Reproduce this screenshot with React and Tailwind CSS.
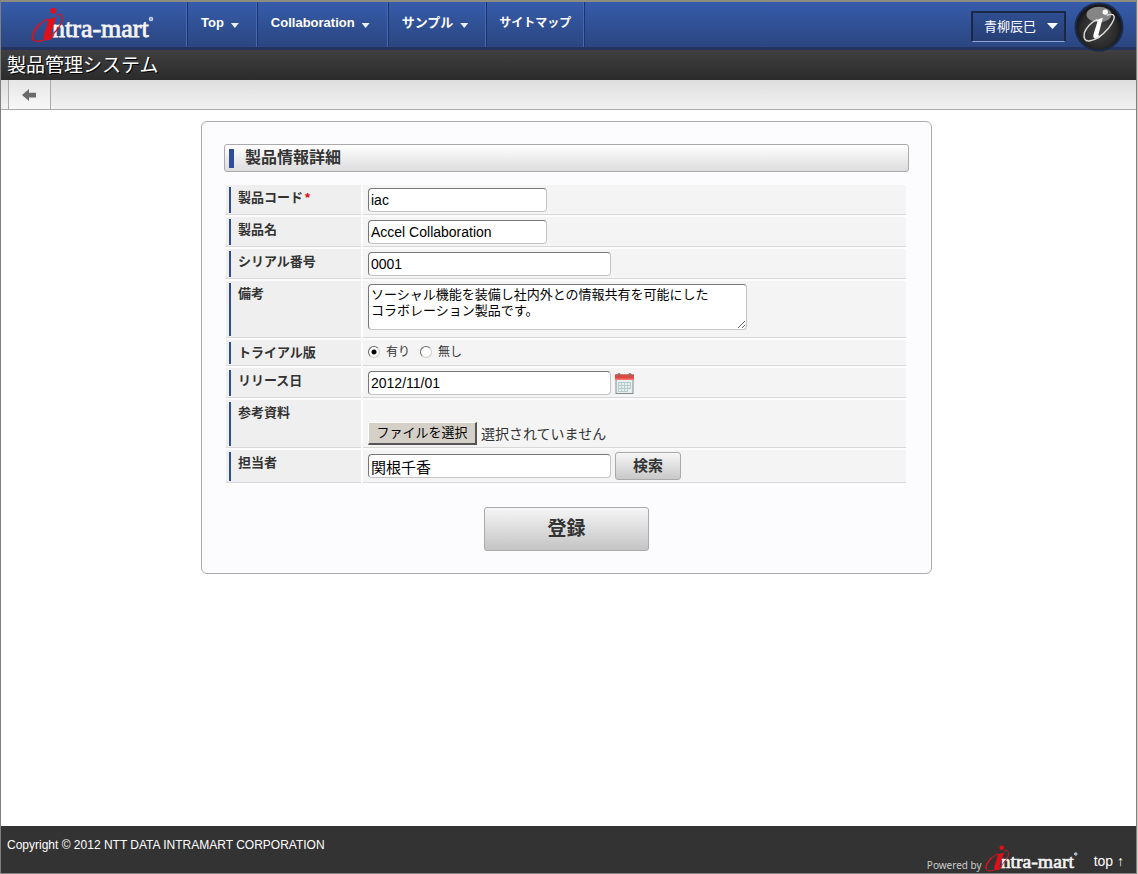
import { useRef, useState } from "react";

const navItems = [
  { label: "Top", menu: true },
  { label: "Collaboration", menu: true },
  { label: "サンプル", menu: true },
  { label: "サイトマップ", menu: false },
];

function IntraMartLogo({ className }) {
  return (
    <svg viewBox="0 0 124 38" className={className} role="img" aria-label="intra-mart">
      <text x="22" y="31" fontFamily="'Liberation Serif', serif" fontSize="26" fill="#f4f4f4" stroke="#f4f4f4" strokeWidth="0.8">
        ntra-mart
      </text>
      <circle cx="121" cy="13" r="1.7" fill="#8fa0cc" stroke="#c9d0e4" strokeWidth="1.2" />
      <circle cx="23.4" cy="4.8" r="3" fill="#e0101b" />
      <path d="M17 13.6 Q21 12.6 26.5 11 L20.5 29 Q19.6 32 22 30.6 L25 28 Q21.5 34.6 17 34.4 Q12.4 33.6 13.8 29 L18.2 15.6 Z" fill="#e0101b" />
      <path d="M18 12.5 Q8 18 4 26 Q-0.5 35 7.5 35.5 Q17 35 26 25 Q35 14 31.5 9.5 Q30 7.5 27 8.6" fill="none" stroke="#d8141f" strokeWidth="1.3" />
      <path d="M10 18 Q0.5 27.5 3.4 33.4" fill="none" stroke="#d8141f" strokeWidth="1.8" />
    </svg>
  );
}

function InfoBadge() {
  return (
    <svg viewBox="0 0 52 52" className="size-[50px]" role="img" aria-label="info">
      <defs>
        <radialGradient id="badge" cx="50%" cy="55%" r="50%">
          <stop offset="0" stopColor="#454545" />
          <stop offset="0.8" stopColor="#2a2a2a" />
          <stop offset="1" stopColor="#16181c" />
        </radialGradient>
      </defs>
      <circle cx="26" cy="26" r="25.5" fill="#1b2a4d" />
      <circle cx="26" cy="26" r="23.5" fill="url(#badge)" />
      <ellipse cx="26" cy="13" rx="13" ry="8" fill="#858585" />
      <circle cx="32.5" cy="10.5" r="2.8" fill="#fff" />
      <path d="M22.5 19 L30 16.5 L25.5 33.5 Q25 36 27.5 34.5 L29.5 33 Q27 38.5 22.5 38.5 Q19 37.5 20.5 33 L24.5 20 Z" fill="#fff" />
      <path d="M24 18 Q14 23.5 10.8 32 Q9 41 16 40.5 Q26 39 36 27 Q44 16.5 41 13.5 Q39 12 34 14" fill="none" stroke="#d8d8d8" strokeWidth="1.5" />
    </svg>
  );
}

function CalendarIcon() {
  return (
    <svg viewBox="0 0 19 21" className="h-[21px] w-[19px]" aria-hidden="true">
      <rect x="1" y="2" width="17" height="18.5" fill="#e6efee" stroke="#858b8b" />
      <rect x="0" y="1.5" width="19" height="5.5" fill="#e2473f" />
      <rect x="0" y="5.5" width="19" height="1.5" fill="#f0776f" />
      <rect x="2.5" y="0" width="3" height="4" rx="1.5" fill="#a06460" />
      <rect x="13.5" y="0" width="3" height="4" rx="1.5" fill="#a06460" />
      <path d="M3 9.5h13M3 12.5h13M3 15.5h13M3 18.5h10M3.5 9v9.5M6.5 9v9.5M9.5 9v9.5M12.5 9v9.5M15.5 9v7" stroke="#b5cccd" strokeWidth="1" fill="none" />
    </svg>
  );
}

function Row({ label, htmlFor, required, className = "pt-[3px] pb-0.5", children }) {
  return (
    <div className="grid grid-cols-[135px_1fr] gap-0.5">
      <div className="flex border-b border-[#d8d8d8] bg-[#efefef] pt-0.5 pb-px pl-[3px]">
        <label htmlFor={htmlFor} className="border-l-2 border-[#2d4d96] pl-[7px] text-[13px] leading-[22px] font-bold">
          {label}
          {required && <span className="ml-0.5 text-red-600">*</span>}
        </label>
      </div>
      <div className={`flex items-center border-b border-[#d8d8d8] bg-[#f4f4f4] px-[5px] ${className}`}>{children}</div>
    </div>
  );
}

const fieldClass =
  "rounded border border-[#c4c4c4] border-t-[#777] border-l-[#777] bg-white px-0.5 text-black outline-none";

function TextField({ className, ...props }) {
  return <input type="text" className={`h-6 ${fieldClass} ${className}`} {...props} />;
}

function Radio({ label, ...props }) {
  return (
    <label className="flex items-center gap-1.5 text-[12px] leading-5">
      <input
        type="radio"
        className="size-3 appearance-none rounded-full border border-[#d0ccc4] border-t-[#666] border-l-[#666] bg-white checked:bg-[radial-gradient(circle,#000_2px,#fff_3px)]"
        {...props}
      />
      {label}
    </label>
  );
}

export default function App() {
  const fileRef = useRef(null);
  const [fileName, setFileName] = useState("選択されていません");

  return (
    <div className="bg-[#d4d0c8] pr-px font-['Liberation_Sans','Noto_Sans_CJK_JP',sans-serif] text-[#333]">
      <div className="flex min-h-screen flex-col border-x border-b border-[#808080] bg-white">
        <header className="flex items-stretch border-t-2 border-b-3 border-t-[#8c8c80] border-b-[#22345f] bg-linear-to-b from-[#365cab] to-[#2b4680]">
          <a href="#" className="flex h-[45px] w-[186px] items-start border-r border-[#4169bd] pt-1 pl-[29px]">
            <IntraMartLogo className="h-[38px] w-[124px]" />
          </a>
          <nav className="flex">
            {navItems.map((item) => (
              <a
                key={item.label}
                href="#"
                className={`flex gap-[7px] border-r border-l border-r-[#4169bd] border-l-[#1e3465] pt-[11px] leading-5 font-bold text-white ${item.menu ? "pr-[17px] pl-[13px] text-[13px]" : "px-3 text-[12px]"}`}
              >
                {item.label}
                {item.menu && <span className="mt-2.5 h-[5px] w-2 bg-[#eef1f8] [clip-path:polygon(0_0,100%_0,50%_100%)]" />}
              </a>
            ))}
          </nav>
          <div className="flex flex-1 items-start justify-end border-l border-[#1e3465] pr-3">
            <div className="relative mt-[9px] mr-2">
              <select
                aria-label="ユーザー"
                className="h-[31px] w-[95px] appearance-none border-2 border-b-1 border-[#1a2747] border-b-[#8ea4d4] bg-linear-to-b from-[#2f4f92] to-[#263f75] pl-[11px] text-[13px] text-white"
              >
                <option>青柳辰巳</option>
              </select>
              <span className="pointer-events-none absolute top-3 right-2 h-1.5 w-[11px] bg-white [clip-path:polygon(0_0,100%_0,50%_100%)]" />
            </div>
            <div className="relative -mb-2.5">
              <InfoBadge />
            </div>
          </div>
        </header>

        <div className="bg-linear-to-b from-[#404040] to-[#2b2b2b] pt-0.5 pl-1.5">
          <h1 className="text-[19px] leading-7 text-white text-shadow-[1px_1px_0_#000]">製品管理システム</h1>
        </div>

        <div className="flex border-b border-[#aaa] bg-linear-to-b from-[#dedede] to-[#f2f2f2] pl-[7px]">
          <button
            type="button"
            aria-label="戻る"
            className="flex h-[29px] w-[43px] items-center justify-center border-x border-[#aaa] bg-linear-to-b from-[#e6e6e6] to-[#f8f8f8] pr-px"
          >
            <svg viewBox="0 0 14 12" className="h-3 w-3.5" aria-hidden="true">
              <path d="M0 6 L7 0 V3.8 H14 V8.4 H7 V12 Z" fill="#6b6b6b" />
            </svg>
          </button>
        </div>

        <main className="flex-1 pt-[11px] pr-1">
          <form
            onSubmit={(e) => e.preventDefault()}
            className="mx-auto max-w-[731px] rounded-md border border-[#aaa] bg-[#fcfcfe] p-[22px]"
          >
            <h2 className="flex items-center gap-[11px] rounded-[3px] border border-[#aaa] bg-linear-to-b from-white to-[#dcdcdc] px-1 text-[16px] leading-[26px] font-bold">
              <span className="h-[19px] w-[5px] bg-[#2d4d96]" />
              製品情報詳細
            </h2>

            <div className="mt-[13px] mr-[3px] ml-0.5 grid gap-0.5">
              <Row label="製品コード" htmlFor="code" required>
                <TextField id="code" defaultValue="iac" className="w-[179px] text-[14px]" />
              </Row>
              <Row label="製品名" htmlFor="name">
                <TextField id="name" defaultValue="Accel Collaboration" className="w-[179px] text-[14px]" />
              </Row>
              <Row label="シリアル番号" htmlFor="serial">
                <TextField id="serial" defaultValue="0001" className="w-[243px] text-[14px]" />
              </Row>
              <Row label="備考" htmlFor="note" className="pt-[3px] pb-[7px]">
                <textarea
                  id="note"
                  defaultValue={"ソーシャル機能を装備し社内外との情報共有を可能にした\nコラボレーション製品です。"}
                  className={`h-[46px] w-[379px] resize py-0.5 text-[13px] leading-4 ${fieldClass}`}
                />
              </Row>
              <Row label="トライアル版" htmlFor="trial-yes" className="gap-2.5 pb-0.5">
                <Radio id="trial-yes" name="trial" label="有り" defaultChecked />
                <Radio id="trial-no" name="trial" label="無し" />
              </Row>
              <Row label="リリース日" htmlFor="release">
                <TextField id="release" defaultValue="2012/11/01" className="w-[243px] text-[14px]" />
                <button type="button" aria-label="カレンダー" className="ml-1">
                  <CalendarIcon />
                </button>
              </Row>
              <Row label="参考資料" htmlFor="file" className="pt-[22px] pb-0.5">
                <input
                  ref={fileRef}
                  id="file"
                  type="file"
                  className="hidden"
                  onChange={(e) => setFileName(e.target.files[0]?.name ?? "選択されていません")}
                />
                <button
                  type="button"
                  onClick={() => fileRef.current.click()}
                  className="h-[23px] w-[109px] border border-r-2 border-b-2 border-white border-r-[#555] border-b-[#555] bg-[#d4d0c8] text-[13px] leading-5 text-black"
                >
                  ファイルを選択
                </button>
                <span className="ml-1 text-[14px] leading-5">{fileName}</span>
              </Row>
              <Row label="担当者" htmlFor="person" className="py-0.5">
                <TextField id="person" defaultValue="関根千香" className="w-[243px] text-[15px]" />
                <button
                  type="button"
                  className="ml-1 h-7 w-[66px] rounded-[3px] border border-[#aaa] bg-linear-to-b from-[#f6f6f6] to-[#c8c8c8] text-[15px] leading-6 font-bold"
                >
                  検索
                </button>
              </Row>
            </div>

            <div className="mt-6">
              <button
                type="submit"
                className="mx-auto block h-11 w-[165px] rounded-[3px] border border-[#aaa] bg-linear-to-b from-[#f6f6f6] to-[#c4c4c4] text-[19px] font-bold"
              >
                登録
              </button>
            </div>
          </form>
        </main>

        <footer className="flex h-[47px] items-start justify-between bg-[#333] pr-3 pl-1.5 text-white">
          <p className="pt-2.5 text-[12px] leading-[18px]">Copyright © 2012 NTT DATA INTRAMART CORPORATION</p>
          <div className="flex items-end pt-[18px]">
            <span className="mr-0.5 font-['Noto_Sans',sans-serif] text-[10px] leading-4 text-[#ccc]">Powered by</span>
            <IntraMartLogo className="h-[29px] w-[94px]" />
            <a href="#" className="ml-4 text-[14px] leading-6">
              top ↑
            </a>
          </div>
        </footer>
      </div>
    </div>
  );
}
